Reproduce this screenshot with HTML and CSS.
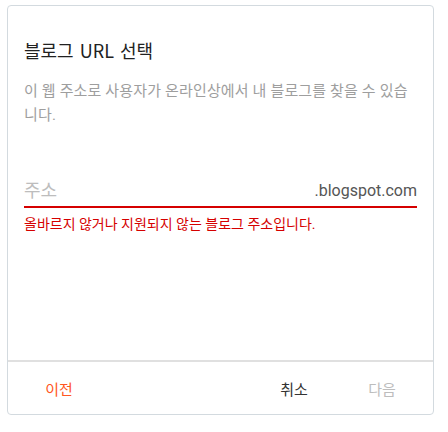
FILE: index.html
```html
<!DOCTYPE html>
<html lang="ko">
<head>
<meta charset="utf-8">
<link rel="stylesheet" href="styles.css">
</head>
<body>
<div class="card">
  <div class="content">
    <h1 class="title">블로그 URL 선택</h1>
    <p class="desc">이 웹 주소로 사용자가 온라인상에서 내 블로그를 찾을 수 있습니다.</p>
    <div class="field">
      <span class="placeholder">주소</span>
      <span class="suffix">.blogspot.com</span>
    </div>
    <div class="error">올바르지 않거나 지원되지 않는 블로그 주소입니다.</div>
  </div>
  <div class="footer">
    <button class="btn btn-prev">이전</button>
    <div class="spacer"></div>
    <button class="btn btn-cancel">취소</button>
    <button class="btn btn-next">다음</button>
  </div>
</div>
</body>
</html>
```
FILE: styles.css
```css
* { box-sizing: border-box; }
html, body { margin: 0; padding: 0; background: #fff; }
body {
  font-family: Roboto, "Noto Sans CJK KR", sans-serif;
  padding: 5px 0 0 7px;
}
.card {
  width: 427px;
  height: 410px;
  border: 1px solid #d3dadf;
  border-radius: 4px;
  display: flex;
  flex-direction: column;
  background: #fff;
}
.content {
  flex: 1;
  padding: 32px 16px 0 16px;
}
.title {
  margin: 0;
  font-family: "Noto Sans CJK KR", sans-serif;
  font-size: 18px;
  line-height: 24px;
  font-weight: 400;
  word-spacing: 1px;
  color: #212121;
}
.desc {
  margin: 17px 0 0 0;
  font-size: 15px;
  line-height: 24px;
  letter-spacing: 0.15px;
  color: #9e9e9e;
}
.field {
  margin-top: 52px;
  display: flex;
  justify-content: space-between;
  align-items: center;
  height: 29px;
  padding-bottom: 3px;
  border-bottom: 2px solid #d50000;
  line-height: 24px;
}
.placeholder { color: #bdbdbd; font-size: 18px; }
.suffix { color: #555; font-size: 16px; }
.error {
  margin-top: 8px;
  font-size: 14px;
  line-height: 16px;
  color: #d50000;
}
.footer {
  height: 54px;
  border-top: 2px solid #e0e0e0;
  display: flex;
  align-items: center;
  padding: 0 19px;
}
.spacer { flex: 1; }
.btn {
  font-family: inherit;
  font-size: 15px;
  font-weight: 400;
  min-width: 64px;
  height: 36px;
  padding: 0 8px;
  border: none;
  background: transparent;
  cursor: pointer;
}
.btn-prev { color: #ff5722; }
.btn-cancel { color: #333; margin-right: 24px; }
.btn-next { color: #bdbdbd; }
```
